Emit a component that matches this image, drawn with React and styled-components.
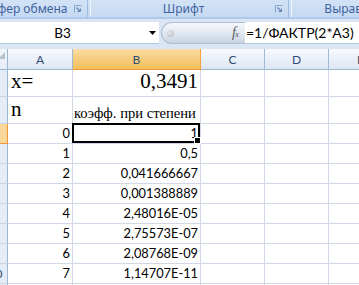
import React from "react";
import styled, { createGlobalStyle } from "styled-components";

const Global = createGlobalStyle`
  html, body { margin: 0; padding: 0; background: #fff; overflow: hidden; }
  #root { width: 359px; height: 285px; overflow: hidden; }
`;

const Frame = styled.div`
  width: 359px;
  height: 285px;
  overflow: hidden;
  display: flex;
  flex-direction: column;
  background: #fff;
`;

/* ---------- Ribbon group labels ---------- */
const Ribbon = styled.div`
  flex: none;
  height: 17px;
  display: flex;
  background: linear-gradient(#d3e3f6, #c5d9f1);
  border-bottom: 2px solid #afc9ea;
`;

const Group = styled.div`
  flex: none;
  width: ${(p) => p.$w}px;
  margin-left: ${(p) => p.$ml || 0}px;
  display: flex;
  align-items: center;
  padding-right: 4px;
  box-sizing: border-box;
`;

const GroupLabel = styled.span`
  flex: 1;
  text-align: center;
  white-space: nowrap;
  overflow: hidden;
  font-family: "Noto Sans", "DejaVu Sans", sans-serif;
  font-size: 12px;
  line-height: 17px;
  color: #3e64a0;
`;

const GroupDivider = styled.div`
  flex: none;
  width: 2px;
  margin: 0 1px;
  border-left: 1px solid #9fbbe0;
  border-right: 1px solid #edf3fb;
`;

const LauncherIcon = () => (
  <svg width="8" height="8" viewBox="0 0 8 8">
    <path d="M0.5 7.5V0.5H7.5" fill="none" stroke="#8aa7cf" strokeWidth="1" />
    <path d="M2.5 2.5L6 6" stroke="#6384b3" strokeWidth="1.2" />
    <path d="M3.5 6.5H6.5V3.5" fill="none" stroke="#6384b3" strokeWidth="1" />
  </svg>
);

/* ---------- Formula bar ---------- */
const FormulaBar = styled.div`
  flex: none;
  height: 30px;
  box-sizing: border-box;
  padding-top: 3px;
  display: flex;
  align-items: flex-start;
  background: #dbe6f4;
`;

const NameBox = styled.div`
  flex: none;
  width: 159px;
  height: 22px;
  box-sizing: border-box;
  background: #fff;
  border-bottom: 1px solid #b6c8df;
  display: flex;
  align-items: center;
`;

const NameText = styled.span`
  width: 125px;
  text-align: center;
  font-family: Lato, "Liberation Sans", sans-serif;
  font-size: 13.5px;
  color: #000;
`;

const DropArrow = styled.svg`
  margin-left: 24px;
  flex: none;
`;

const FxButton = styled.div`
  flex: none;
  width: 84px;
  height: 22px;
  margin-left: 2px;
  box-sizing: border-box;
  border-radius: 11px 0 0 11px;
  border: 1px solid #aebfd6;
  border-right: none;
  background: linear-gradient(#f7f9fc, #dfe6f0 55%, #c9d4e3);
  display: flex;
  align-items: center;
  padding: 0 7px 0 5px;
`;

const Knob = styled.span`
  width: 7px;
  height: 7px;
  border-radius: 50%;
  background: radial-gradient(circle at 40% 35%, #e4e6ea, #b3b8c0);
`;

const Fx = styled.span`
  margin-left: auto;
  font-family: "Liberation Serif", serif;
  font-style: italic;
  font-size: 14px;
  color: #5b5b5b;
  letter-spacing: -1px;
  & sub {
    font-size: 9px;
    vertical-align: 0;
  }
`;

const FormulaInput = styled.div`
  flex: 1;
  height: 22px;
  box-sizing: border-box;
  background: #fff;
  border-bottom: 1px solid #b6c8df;
  display: flex;
  align-items: center;
  padding-left: 1px;
  font-family: Lato, "Liberation Sans", sans-serif;
  font-size: 14px;
  color: #000;
  white-space: nowrap;
`;

/* ---------- Sheet ---------- */
const Sheet = styled.div`
  display: grid;
  grid-template-columns: 24px 65px 128px 64px 64px 64px;
  grid-template-rows: 21px 27px 27px repeat(9, 20px);
  margin-left: -16px;
`;

const Corner = styled.div`
  position: relative;
  box-sizing: border-box;
  background: linear-gradient(#f3f6fb, #e4ecf7);
  border-right: 1px solid #9eb6ce;
  border-bottom: 1px solid #9eb6ce;
`;

const CornerTriangle = styled.span`
  position: absolute;
  right: 2px;
  top: 3px;
  width: 0;
  height: 0;
  border-left: 7px solid transparent;
  border-bottom: 7px solid #b6c3d3;
`;

const ColHeader = styled.div`
  box-sizing: border-box;
  display: flex;
  align-items: center;
  justify-content: center;
  font-family: Lato, "Liberation Sans", sans-serif;
  font-size: 12px;
  color: #2f4d77;
  background: ${(p) =>
    p.$active
      ? "linear-gradient(#f9dba4, #f6cd7e 50%, #f1bf5b)"
      : "linear-gradient(#f8fafd, #eaf0f8 50%, #dde6f2)"};
  border-right: 1px solid ${(p) => (p.$active ? "#f2a33f" : "#a3b9d3")};
  border-bottom: 1px solid ${(p) => (p.$active ? "#f29536" : "#9eb6ce")};
`;

const RowHeader = styled.div`
  box-sizing: border-box;
  display: flex;
  align-items: center;
  justify-content: center;
  font-family: Lato, "Liberation Sans", sans-serif;
  font-size: 12px;
  color: #2f4d77;
  background: ${(p) => (p.$active ? "#f9d69a" : "#e4ecf7")};
  border-right: 1px solid ${(p) => (p.$active ? "#f29536" : "#9eb6ce")};
  border-bottom: 1px solid ${(p) => (p.$active ? "#f29536" : "#c5d3e3")};
`;

const Cell = styled.div`
  position: relative;
  box-sizing: border-box;
  border-right: 1px solid #d0d7e5;
  border-bottom: 1px solid #d0d7e5;
  display: flex;
  align-items: flex-end;
  justify-content: ${(p) => (p.$right ? "flex-end" : "flex-start")};
  padding: 0 ${(p) => (p.$right ? 2 : 0)}px ${(p) => p.$pb ?? 3}px
    ${(p) => p.$pl ?? 2}px;
  font-family: ${(p) =>
    p.$serif ? '"Liberation Serif", "Times New Roman", serif' : 'Lato, "Liberation Sans", sans-serif'};
  font-size: ${(p) => p.$size || 12.8}px;
  line-height: 1;
  white-space: nowrap;
  color: #000;
`;

const Selection = styled.div`
  position: absolute;
  left: -1px;
  top: -1px;
  right: 0;
  bottom: 0;
  border: 2px solid #000;
  pointer-events: none;
`;

const FillHandle = styled.span`
  position: absolute;
  right: -3px;
  bottom: -3px;
  width: 5px;
  height: 5px;
  background: #000;
  border: 1px solid #fff;
`;

const data = [
  ["0", "1"],
  ["1", "0,5"],
  ["2", "0,041666667"],
  ["3", "0,001388889"],
  ["4", "2,48016E-05"],
  ["5", "2,75573E-07"],
  ["6", "2,08768E-09"],
  ["7", "1,14707E-11"],
];

const Empty = () => (
  <>
    <Cell />
    <Cell />
    <Cell />
  </>
);

export default function App() {
  return (
    <>
      <Global />
      <Frame>
        <Ribbon>
          <Group $w={108} $ml={-22}>
            <GroupLabel>Буфер обмена</GroupLabel>
            <LauncherIcon />
          </Group>
          <GroupDivider />
          <Group $w={195}>
            <GroupLabel>Шрифт</GroupLabel>
            <LauncherIcon />
          </Group>
          <GroupDivider />
          <Group $w={162}>
            <GroupLabel>Выравнивание</GroupLabel>
            <LauncherIcon />
          </Group>
        </Ribbon>

        <FormulaBar>
          <NameBox>
            <NameText>B3</NameText>
            <DropArrow width="7" height="4" viewBox="0 0 7 4">
              <path d="M0 0H7L3.5 4Z" fill="#000" />
            </DropArrow>
          </NameBox>
          <FxButton>
            <Knob />
            <Fx>
              f<sub>x</sub>
            </Fx>
          </FxButton>
          <FormulaInput>=1/ФАКТР(2*A3)</FormulaInput>
        </FormulaBar>

        <Sheet>
          <Corner>
            <CornerTriangle />
          </Corner>
          <ColHeader>A</ColHeader>
          <ColHeader $active>B</ColHeader>
          <ColHeader>C</ColHeader>
          <ColHeader>D</ColHeader>
          <ColHeader>E</ColHeader>

          <RowHeader>1</RowHeader>
          <Cell $serif $size={21} $pl={3} $pb={4}>
            x=
          </Cell>
          <Cell $serif $size={21} $right $pb={4}>
            0,3491
          </Cell>
          <Empty />

          <RowHeader>2</RowHeader>
          <Cell $serif $size={21} $pl={3} $pb={3}>
            n
          </Cell>
          <Cell $serif $size={14.6} $pl={1} $pb={2}>
            коэфф. при степени
          </Cell>
          <Empty />

          {data.map(([n, v], i) => (
            <React.Fragment key={n}>
              <RowHeader $active={i === 0}>{i + 3}</RowHeader>
              <Cell $right>{n}</Cell>
              <Cell $right>
                {v}
                {i === 0 && (
                  <Selection>
                    <FillHandle />
                  </Selection>
                )}
              </Cell>
              <Empty />
            </React.Fragment>
          ))}

          <RowHeader>11</RowHeader>
          <Cell />
          <Cell />
          <Empty />
        </Sheet>
      </Frame>
    </>
  );
}
